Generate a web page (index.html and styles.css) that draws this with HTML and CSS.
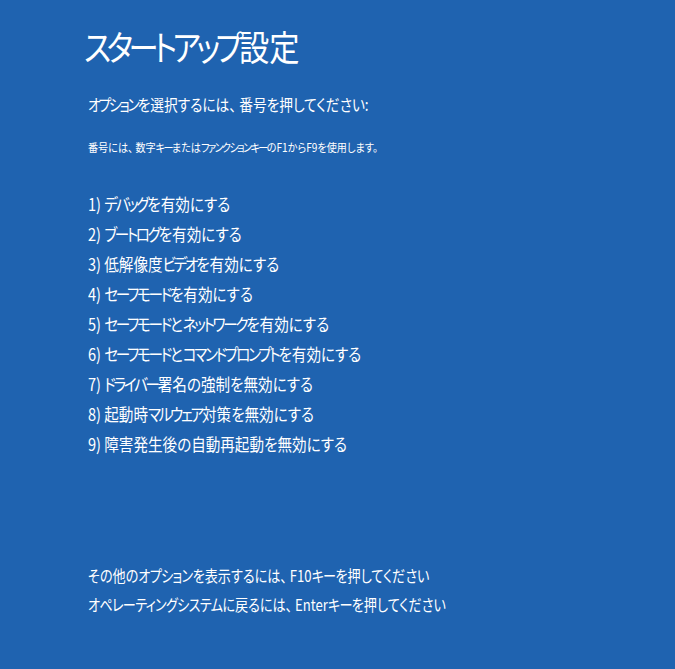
FILE: index.html
```html
<!DOCTYPE html>
<html lang="ja">
<head>
<meta charset="utf-8">
<link rel="stylesheet" href="styles.css">
</head>
<body>
<main class="screen">
  <h1 class="title"><span class="squeeze"><span class="k">スタートアップ</span>設定</span></h1>
  <p class="prompt"><span class="squeeze"><span class="k">オプション</span>を選択するには、 番号を押してください:</span></p>
  <p class="hint"><span class="squeeze">番号には、 数字<span class="k">キー</span>または<span class="k">ファンクションキー</span>のF1からF9を使用します。</span></p>
  <ol class="options">
    <li><span class="squeeze">1)&nbsp;<span class="k">デバッグ</span>を有効にする</span></li>
    <li><span class="squeeze">2)&nbsp;<span class="k">ブートログ</span>を有効にする</span></li>
    <li><span class="squeeze">3)&nbsp;低解像度<span class="k">ビデオ</span>を有効にする</span></li>
    <li><span class="squeeze">4)&nbsp;<span class="k">セーフモード</span>を有効にする</span></li>
    <li><span class="squeeze">5)&nbsp;<span class="k">セーフモード</span>と<span class="k">ネットワーク</span>を有効にする</span></li>
    <li><span class="squeeze">6)&nbsp;<span class="k">セーフモード</span>と<span class="k">コマンドプロンプト</span>を有効にする</span></li>
    <li><span class="squeeze">7)&nbsp;<span class="k">ドライバー</span>署名の強制を無効にする</span></li>
    <li><span class="squeeze">8)&nbsp;起動時<span class="k">マルウェア</span>対策を無効にする</span></li>
    <li><span class="squeeze">9)&nbsp;障害発生後の自動再起動を無効にする</span></li>
  </ol>
  <div class="footer">
    <p class="foot-line"><span class="squeeze">その他の<span class="k">オプション</span>を表示するには、 F10<span class="k">キー</span>を押してください</span></p>
    <p class="foot-line"><span class="squeeze"><span class="k">オペレーティングシステム</span>に戻るには、 Enter<span class="k">キー</span>を押してください</span></p>
  </div>
</main>
</body>
</html>
```
FILE: styles.css
```css
html, body {
  margin: 0;
  padding: 0;
  background: #1f63b0;
}
body {
  width: 675px;
  height: 669px;
  overflow: hidden;
  color: #ffffff;
  font-family: "Noto Sans CJK JP", "Noto Sans", sans-serif;
  font-feature-settings: "palt" 1;
}
.screen {
  padding: 22px 0 0 88px;
  display: flex;
  flex-direction: column;
}
.squeeze {
  display: inline-block;
  transform: scaleX(0.857);
  transform-origin: left center;
  white-space: nowrap;
}
.k {
  letter-spacing: -0.156em;
}
.title .squeeze {
  transform: scaleX(0.865);
}
.title {
  margin: 0 0 0 -4px;
  font-size: 35px;
  font-weight: 400;
  line-height: 48px;
}
.title .k {
  letter-spacing: -0.15em;
}
.prompt {
  margin: 22px 0 0 0;
  font-size: 16px;
  line-height: 24px;
}
.hint {
  margin: 23px 0 0 0;
  font-size: 11.8px;
  line-height: 16px;
}
.options {
  list-style: none;
  margin: 34px 0 0 0;
  padding: 0;
  font-size: 17px;
  line-height: 30px;
}
.footer {
  margin-top: 102px;
  font-size: 16px;
  line-height: 29px;
}
.footer .squeeze {
  transform: scaleX(0.82);
}
.footer .k {
  letter-spacing: -0.052em;
}
.foot-line {
  margin: 0;
}
```
